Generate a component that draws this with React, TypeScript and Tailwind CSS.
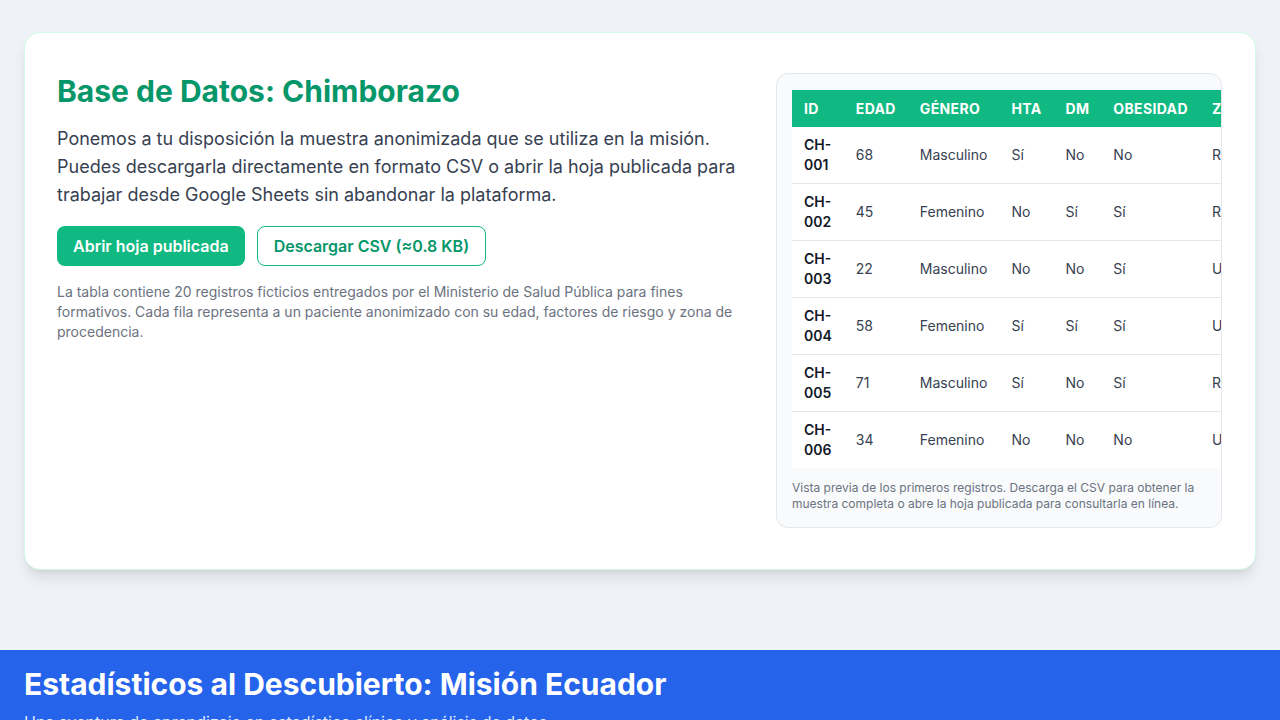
const rows = [
  ["CH-001", "68", "Masculino", "Sí", "No", "No", "Rural"],
  ["CH-002", "45", "Femenino", "No", "Sí", "Sí", "Rural"],
  ["CH-003", "22", "Masculino", "No", "No", "Sí", "Urbana"],
  ["CH-004", "58", "Femenino", "Sí", "Sí", "Sí", "Urbana"],
  ["CH-005", "71", "Masculino", "Sí", "No", "Sí", "Rural"],
  ["CH-006", "34", "Femenino", "No", "No", "No", "Urbana"],
];

const headers = ["ID", "Edad", "Género", "HTA", "DM", "Obesidad", "Zona"];

export default function App() {
  return (
    <div className="min-h-screen bg-[#eff3f8] font-['Inter',sans-serif]">
      <main className="px-6 pt-8 pb-20">
        <section className="bg-white border border-[#d1fae5] rounded-2xl shadow-lg pl-8 pr-[33px] pt-10 pb-[41px]">
          <div className="grid grid-cols-[1fr_446px] gap-[30px] items-start">
            <div>
              <h2 className="text-3xl font-bold text-[#059669]">Base de Datos: Chimborazo</h2>
              <p className="mt-4 text-lg leading-7 text-[#374151]">
                Ponemos a tu disposición la muestra anonimizada que se utiliza en la misión. Puedes descargarla
                directamente en formato CSV o abrir la hoja publicada para trabajar desde Google Sheets sin abandonar la
                plataforma.
              </p>
              <div className="mt-[17px] flex gap-3">
                <button className="h-10 px-4 rounded-lg bg-[#10b981] text-white font-semibold">
                  Abrir hoja publicada
                </button>
                <button className="h-10 px-4 rounded-lg border border-[#10b981] text-[#059669] font-semibold">
                  Descargar CSV (≈0.8 KB)
                </button>
              </div>
              <p className="mt-4 text-sm leading-5 text-[#6b7280]">
                La tabla contiene 20 registros ficticios entregados por el Ministerio de Salud Pública para fines
                formativos. Cada fila representa a un paciente anonimizado con su edad, factores de riesgo y zona de
                procedencia.
              </p>
            </div>
            <div className="bg-[#f8fafc] border border-[#e5e7eb] rounded-xl px-[15px] pt-4 pb-[15px] overflow-hidden">
              <table className="w-full text-sm text-left">
                <thead>
                  <tr className="bg-[#10b981] text-white">
                    {headers.map((h) => (
                      <th key={h} className="px-3 pt-[9px] pb-2 font-bold uppercase tracking-wide">
                        {h}
                      </th>
                    ))}
                  </tr>
                </thead>
                <tbody className="bg-white">
                  {rows.map((r, i) => (
                    <tr key={r[0]} className={i < rows.length - 1 ? "border-b border-[#e5e7eb]" : ""}>
                      {r.map((c, j) => (
                        <td
                          key={j}
                          className={
                            j === 0
                              ? "px-3 py-2 font-semibold text-[#111827]"
                              : "px-3 py-2 text-[#374151]"
                          }
                        >
                          {c}
                        </td>
                      ))}
                    </tr>
                  ))}
                </tbody>
              </table>
              <p className="mt-3 text-xs leading-4 text-[#6b7280]">
                Vista previa de los primeros registros. Descarga el CSV para obtener la muestra completa o abre la hoja
                publicada para consultarla en línea.
              </p>
            </div>
          </div>
        </section>
      </main>
      <footer className="bg-[#2563eb] text-white px-6 pt-4 pb-8">
        <h1 className="text-3xl font-bold">Estadísticos al Descubierto: Misión Ecuador</h1>
        <p className="mt-2 text-base text-[#dbeafe]">
          Una aventura de aprendizaje en estadística clínica y análisis de datos.
        </p>
      </footer>
    </div>
  );
}
